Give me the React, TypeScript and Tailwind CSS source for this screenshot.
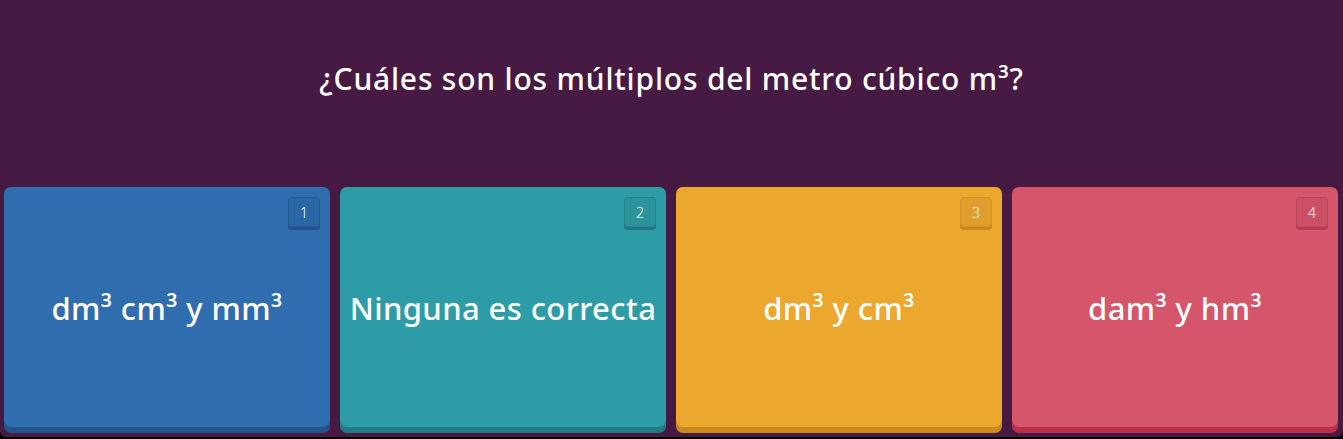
const OPTIONS = [
  { n: 1, text: "dm³ cm³ y mm³", face: "bg-[#2f6dae]", edge: "bg-[#24548a]", badge: "bg-[#2c67a5] border-[#265a91] shadow-[0_3px_0_#24538a]" },
  { n: 2, text: "Ninguna es correcta", face: "bg-[#2d9ca6]", edge: "bg-[#237a82]", badge: "bg-[#2b949d] border-[#25838b] shadow-[0_3px_0_#227880]" },
  { n: 3, text: "dm³ y cm³", face: "bg-[#eba72e]", edge: "bg-[#c98b1d]", badge: "bg-[#e09f2c] border-[#cf9226] shadow-[0_3px_0_#c4881f]" },
  { n: 4, text: "dam³ y hm³", face: "bg-[#d5556a]", edge: "bg-[#bc2f4b]", badge: "bg-[#cb5065] border-[#bb4559] shadow-[0_3px_0_#b43d51]" },
];

export default function App() {
  return (
    <div
      className="h-[439px] w-full overflow-hidden bg-black"
      style={{ fontFamily: '"Noto Sans", "Open Sans", sans-serif' }}
    >
      <div className="flex h-[437px] flex-col bg-[#461a43] rounded-b-md">
        <div className="flex h-[187px] items-start justify-center pt-[58px]">
          <h1 className="text-[30px] font-medium leading-[42px] text-white tracking-[0.8px]">
            ¿Cuáles son los múltiplos del metro cúbico m³?
          </h1>
        </div>

        <div className="flex gap-[10px] pl-[4px] pr-[5px]">
          {OPTIONS.map((o) => (
            <div key={o.n} className={`flex-1 h-[246px] rounded-[7px] ${o.edge} pb-[6px]`}>
              <div className={`relative flex h-full items-center justify-center rounded-[7px] ${o.face}`}>
                <span
                  className={`absolute right-[10px] top-[10px] flex h-[30px] w-[32px] items-center justify-center rounded-[4px] border text-[14px] font-light text-white ${o.badge}`}
                >
                  {o.n}
                </span>
                <span className="text-[31px] font-medium leading-none text-white tracking-[0.4px] pt-[2px]">
                  {o.text}
                </span>
              </div>
            </div>
          ))}
        </div>
      </div>
    </div>
  );
}
